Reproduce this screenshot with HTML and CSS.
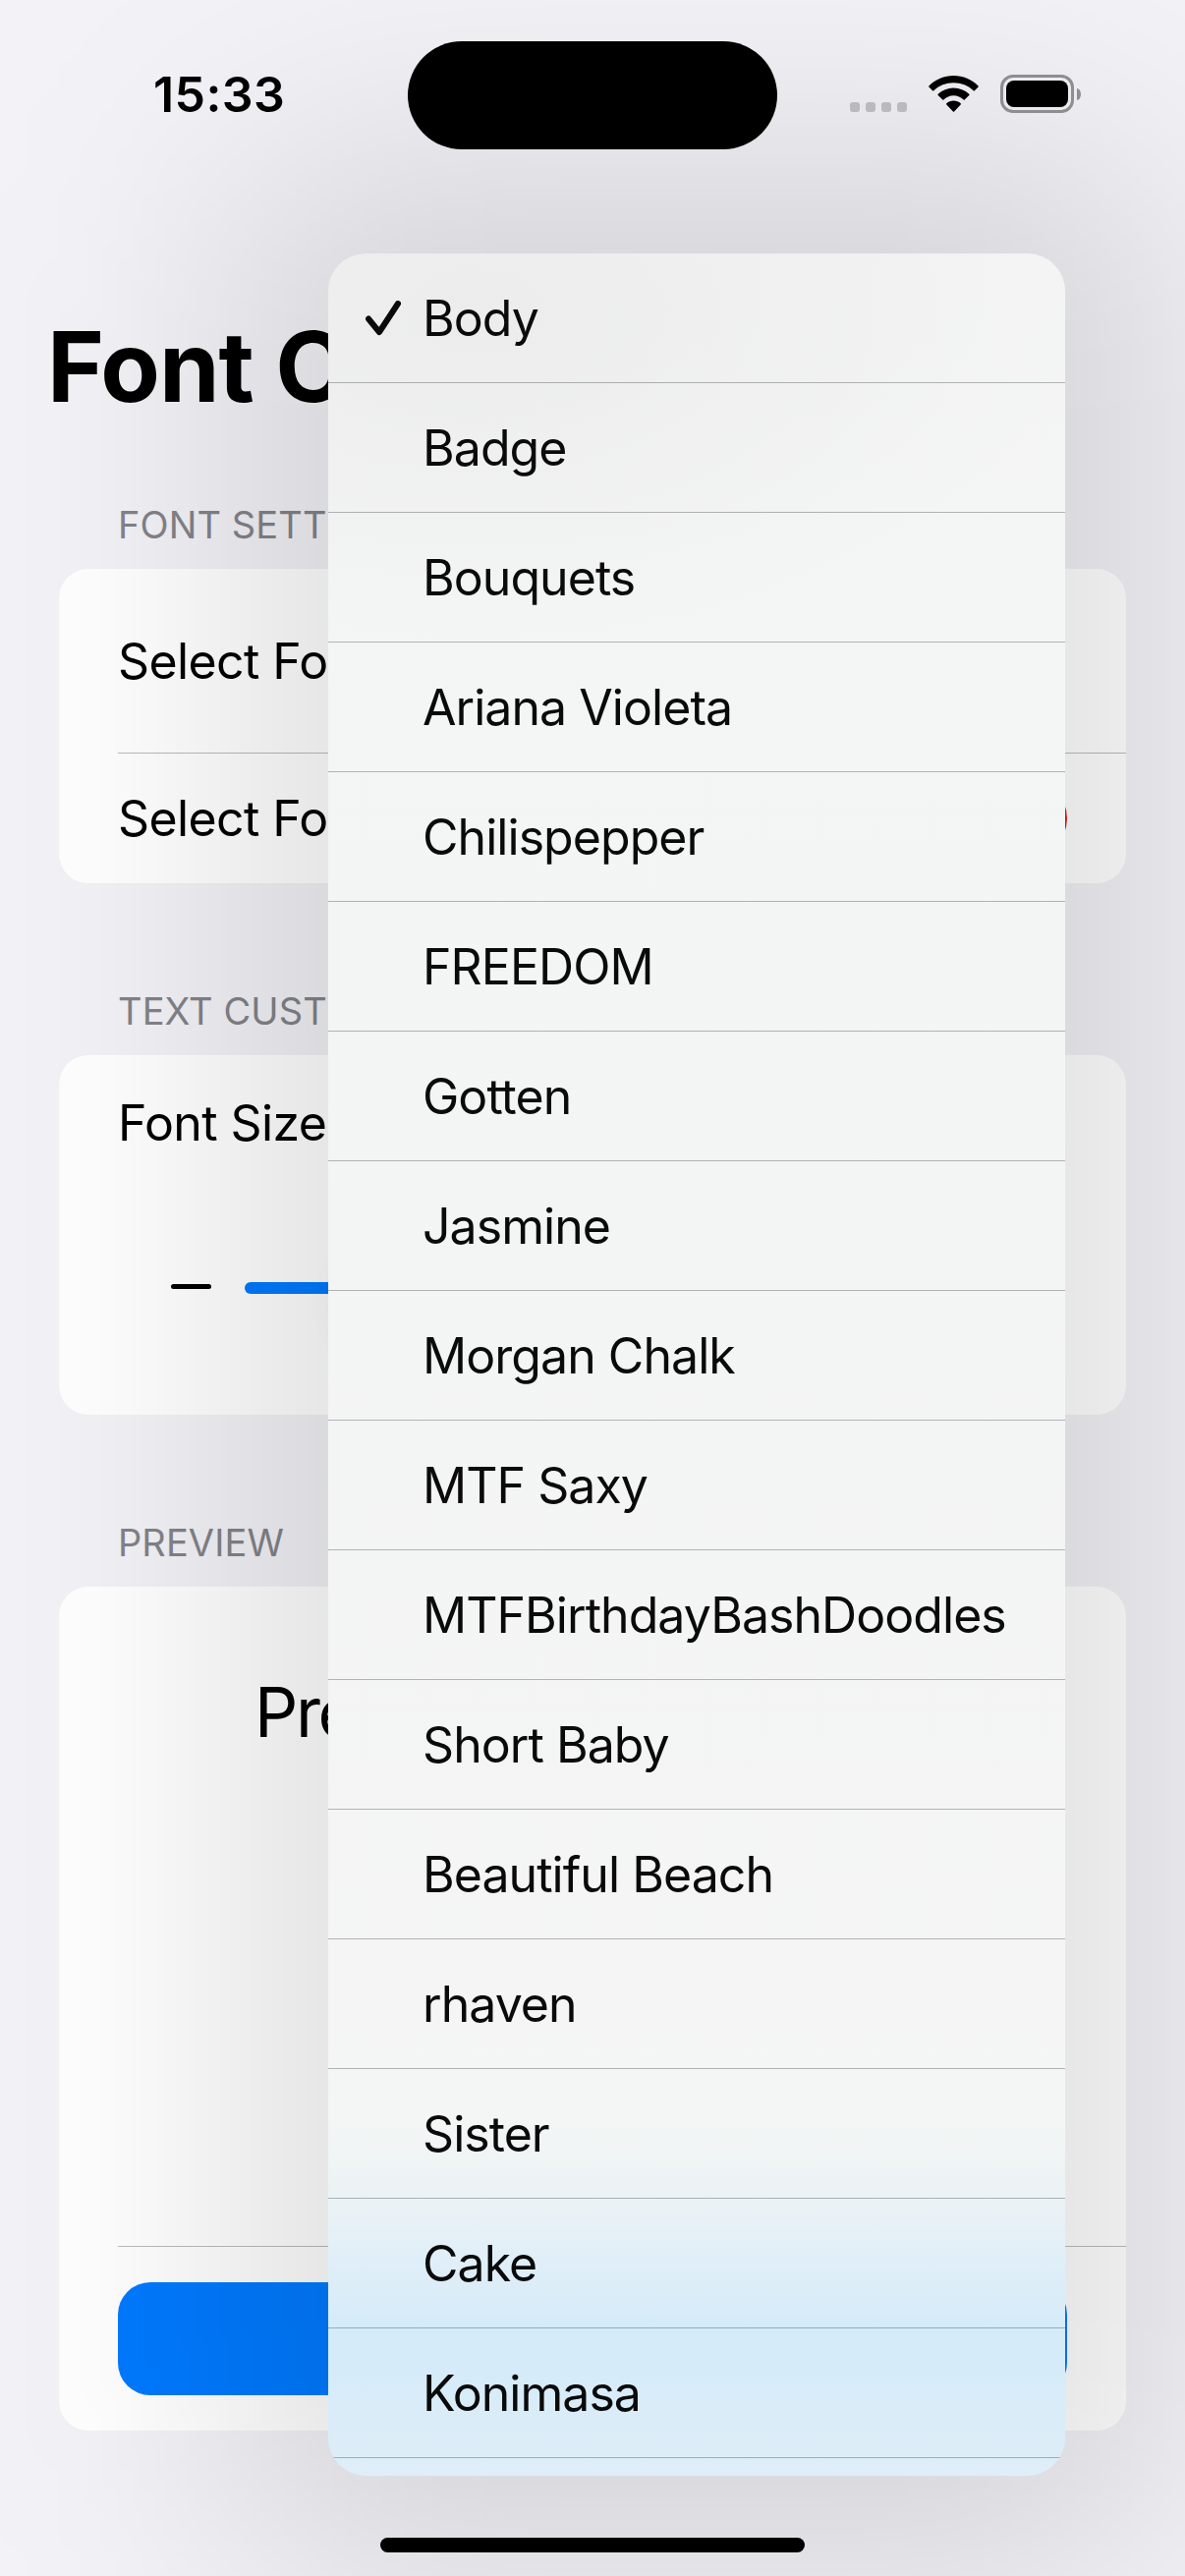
FILE: index.html
```html
<!DOCTYPE html>
<html lang="en">
<head>
<meta charset="utf-8">
<title>Font</title>
<link rel="stylesheet" href="styles.css">
</head>
<body>
<div class="screen">
  <header class="status">
    <div class="time">15:33</div>
    <div class="island"></div>
    <div class="indicators">
      <div class="dots"><i></i><i></i><i></i><i></i></div>
      <svg class="wifi" width="51" height="38" viewBox="0 0 51 38">
        <path d="M25.5 0C35 0 44 3.900 50.600 10.400Q51.200 11 50.600 11.600L46.900 15.300Q46.300 15.900 45.700 15.300C40.500 10.200 33.200 7.300 25.500 7.300S10.500 10.200 5.300 15.300Q4.700 15.900 4.100 15.300L.4 11.600Q-.2 11 .4 10.400C7 3.900 16 0 25.500 0Z"/>
        <path d="M25.500 12.500C31.500 12.500 37 14.800 41.300 18.700Q41.900 19.300 41.300 19.900L36.700 24.400Q36.200 24.900 35.600 24.400C33 22 29.400 20.300 25.500 20.300S18 22 15.400 24.400Q14.800 24.900 14.300 24.400L9.700 19.900Q9.100 19.300 9.700 18.700C14 14.800 19.500 12.500 25.500 12.500Z"/>
        <path d="M25.500 25.600C28.300 25.600 30.800 26.600 32.700 28.200Q33.300 28.800 32.700 29.400L26.100 36.500Q25.500 37.100 24.900 36.500L18.300 29.400Q17.700 28.800 18.300 28.200C20.200 26.600 22.700 25.600 25.500 25.600Z"/>
      </svg>
      <div class="battery"><div class="shell"><div class="charge"></div></div><div class="nub"></div></div>
    </div>
  </header>

  <main class="page">
    <h1 class="title">Font C</h1>

    <h2 class="heading">FONT SETT</h2>
    <section class="card">
      <div class="row row-font">Select Fo</div>
      <div class="row row-color">Select Fo<span class="well"></span></div>
    </section>

    <h2 class="heading">TEXT CUST</h2>
    <section class="card card-size">
      <div class="label">Font Size</div>
      <div class="slider"><span class="minus"></span><span class="track"><span class="thumb"></span></span></div>
    </section>

    <h2 class="heading">PREVIEW</h2>
    <section class="card">
      <div class="sample">Pre</div>
      <div class="action"><div class="button"></div></div>
    </section>
  </main>

  <div class="home"></div>

  <div class="menu-shadow"></div>
  <div class="menu">
    <ul class="items">
      <li><svg class="check" width="38" height="36" viewBox="0 0 38 36"><path d="M3 18.500 14 32 33 3"/></svg>Body</li>
      <li>Badge</li>
      <li>Bouquets</li>
      <li>Ariana Violeta</li>
      <li>Chilispepper</li>
      <li>FREEDOM</li>
      <li>Gotten</li>
      <li>Jasmine</li>
      <li>Morgan Chalk</li>
      <li>MTF Saxy</li>
      <li>MTFBirthdayBashDoodles</li>
      <li>Short Baby</li>
      <li>Beautiful Beach</li>
      <li>rhaven</li>
      <li>Sister</li>
      <li>Cake</li>
      <li>Konimasa</li>
    </ul>
  </div>
</div>
</body>
</html>
```
FILE: styles.css
```css
* { box-sizing: border-box; margin: 0; padding: 0; }

body {
  background: #f2f2f7;
  color: #000;
  font-family: Inter, "Liberation Sans", sans-serif;
  font-size: 50px;
  font-variant-ligatures: none;
  letter-spacing: -0.95px;
}

.screen {
  position: relative;
  display: flex;
  flex-direction: column;
  width: 1206px;
  height: 2622px;
  overflow: hidden;
}

/* Status bar */
.status {
  position: relative;
  z-index: 2;
  display: grid;
  grid-template-columns: 415px 376px 1fr;
  height: 193px;
  padding-top: 42px;
}
.time {
  padding-left: 156px;
  line-height: 108px;
  font-weight: 600;
  letter-spacing: 0.4px;
}
.island { height: 110px; border-radius: 55px; background: #000; }
.indicators {
  display: flex;
  align-items: flex-start;
  padding: 34px 0 0 74px;
}
.dots { display: flex; gap: 6px; padding-top: 28px; }
.dots i { width: 10px; height: 10px; border-radius: 3px; background: #b9b9be; }
.wifi { margin: 1px 0 0 22px; }
.battery { display: flex; align-items: center; gap: 3px; margin-left: 22px; }
.shell {
  width: 75px;
  height: 39px;
  padding: 3px;
  border: 3px solid #8e8e91;
  border-radius: 13px;
}
.charge { height: 27px; border-radius: 8px; background: #000; }
.nub { width: 4px; height: 12px; border-radius: 0 4px 4px 0 / 0 6px 6px 0; background: #8e8e91; }

/* Form behind the menu */
.page { padding: 120px 60px 0; letter-spacing: -0.6px; }
.title {
  margin: 0 0 56px -12px;
  line-height: 120px;
  font-size: 99px;
  font-weight: 700;
  letter-spacing: -1px;
}
.heading {
  padding-left: 60px;
  line-height: 90px;
  font-size: 38px;
  font-weight: 400;
  letter-spacing: 0.1px;
  color: #838388;
}
.card {
  margin-bottom: 85px;
  padding-left: 60px;
  border-radius: 30px;
  background: #fff;
}
.row { display: flex; align-items: center; justify-content: space-between; padding-right: 60px; }
.row-font { height: 188px; border-bottom: 1px solid #bcbcbd; }
.row-color { height: 132px; }
.well {
  width: 84px;
  height: 84px;
  border-radius: 50%;
  background: conic-gradient(#f0a020, #d02010 25%, #b03090 50%, #3070e0 65%, #40c060 85%, #f0a020);
}
.card-size { height: 366px; padding-top: 24px; }
.label { line-height: 90px; }
.slider { display: flex; align-items: center; margin-top: 117px; padding: 0 190px 0 54px; }
.minus { width: 41px; height: 5px; margin: 0 34px 3px 0; border-radius: 3px; background: #000; }
.track {
  display: flex;
  align-items: center;
  flex: 1;
  height: 12px;
  padding-left: 103px;
  border-radius: 6px;
  background: #007aff;
}
.thumb {
  width: 84px;
  height: 84px;
  border-radius: 50%;
  background: #fff;
  box-shadow: 0 18px 39px rgba(0, 0, 0, .13);
}
.sample {
  height: 672px;
  padding: 78px 0 0 139px;
  line-height: 100px;
  font-size: 69.5px;
  letter-spacing: -2.5px;
  border-bottom: 1px solid #bcbcbd;
}
.action { padding: 36px 60px 36px 0; }
.button { height: 115px; border-radius: 33px; background: #007aff; }

.home {
  position: absolute;
  z-index: 2;
  left: 387px;
  top: 2583px;
  width: 432px;
  height: 15px;
  border-radius: 8px;
  background: #000;
}

/* Font picker menu */
.menu-shadow {
  position: absolute;
  left: 234px;
  top: 158px;
  width: 950px;
  height: 2462px;
  border-radius: 100px;
  background: rgba(0, 0, 0, .12);
  filter: blur(130px);
}
.menu {
  position: absolute;
  z-index: 1;
  left: 334px;
  top: 258px;
  width: 750px;
  height: 2262px;
}
.items {
  height: 100%;
  overflow: hidden;
  border-radius: 38px;
  list-style: none;
  color: #0a0a0a;
  background:
    radial-gradient(600px 340px at 20% 60px, #ececed 0, rgba(236, 236, 237, 0) 100%),
    linear-gradient(#f4f4f5 0, #f4f5f5 300px, #f3f4f4 1000px, #f5f5f5 1800px, #f3f6f5 1900px, #ebf2f5 1984px, #dfeef8 2050px, #d5ebf9 2110px, #d5ebf9 2150px, #daecf8 2205px, #dfeef8 2262px);
}
.items li {
  display: flex;
  align-items: center;
  height: 132px;
  padding-left: 96px;
  border-bottom: 1px solid rgba(0, 10, 15, .28);
}
.items li:nth-child(n + 16) { border-bottom-color: rgba(0, 50, 90, .33); }
.check {
  margin: 0 20px 0 -58px;
  fill: none;
  stroke: #0a0a0a;
  stroke-width: 6;
  stroke-linecap: round;
  stroke-linejoin: round;
}
```
